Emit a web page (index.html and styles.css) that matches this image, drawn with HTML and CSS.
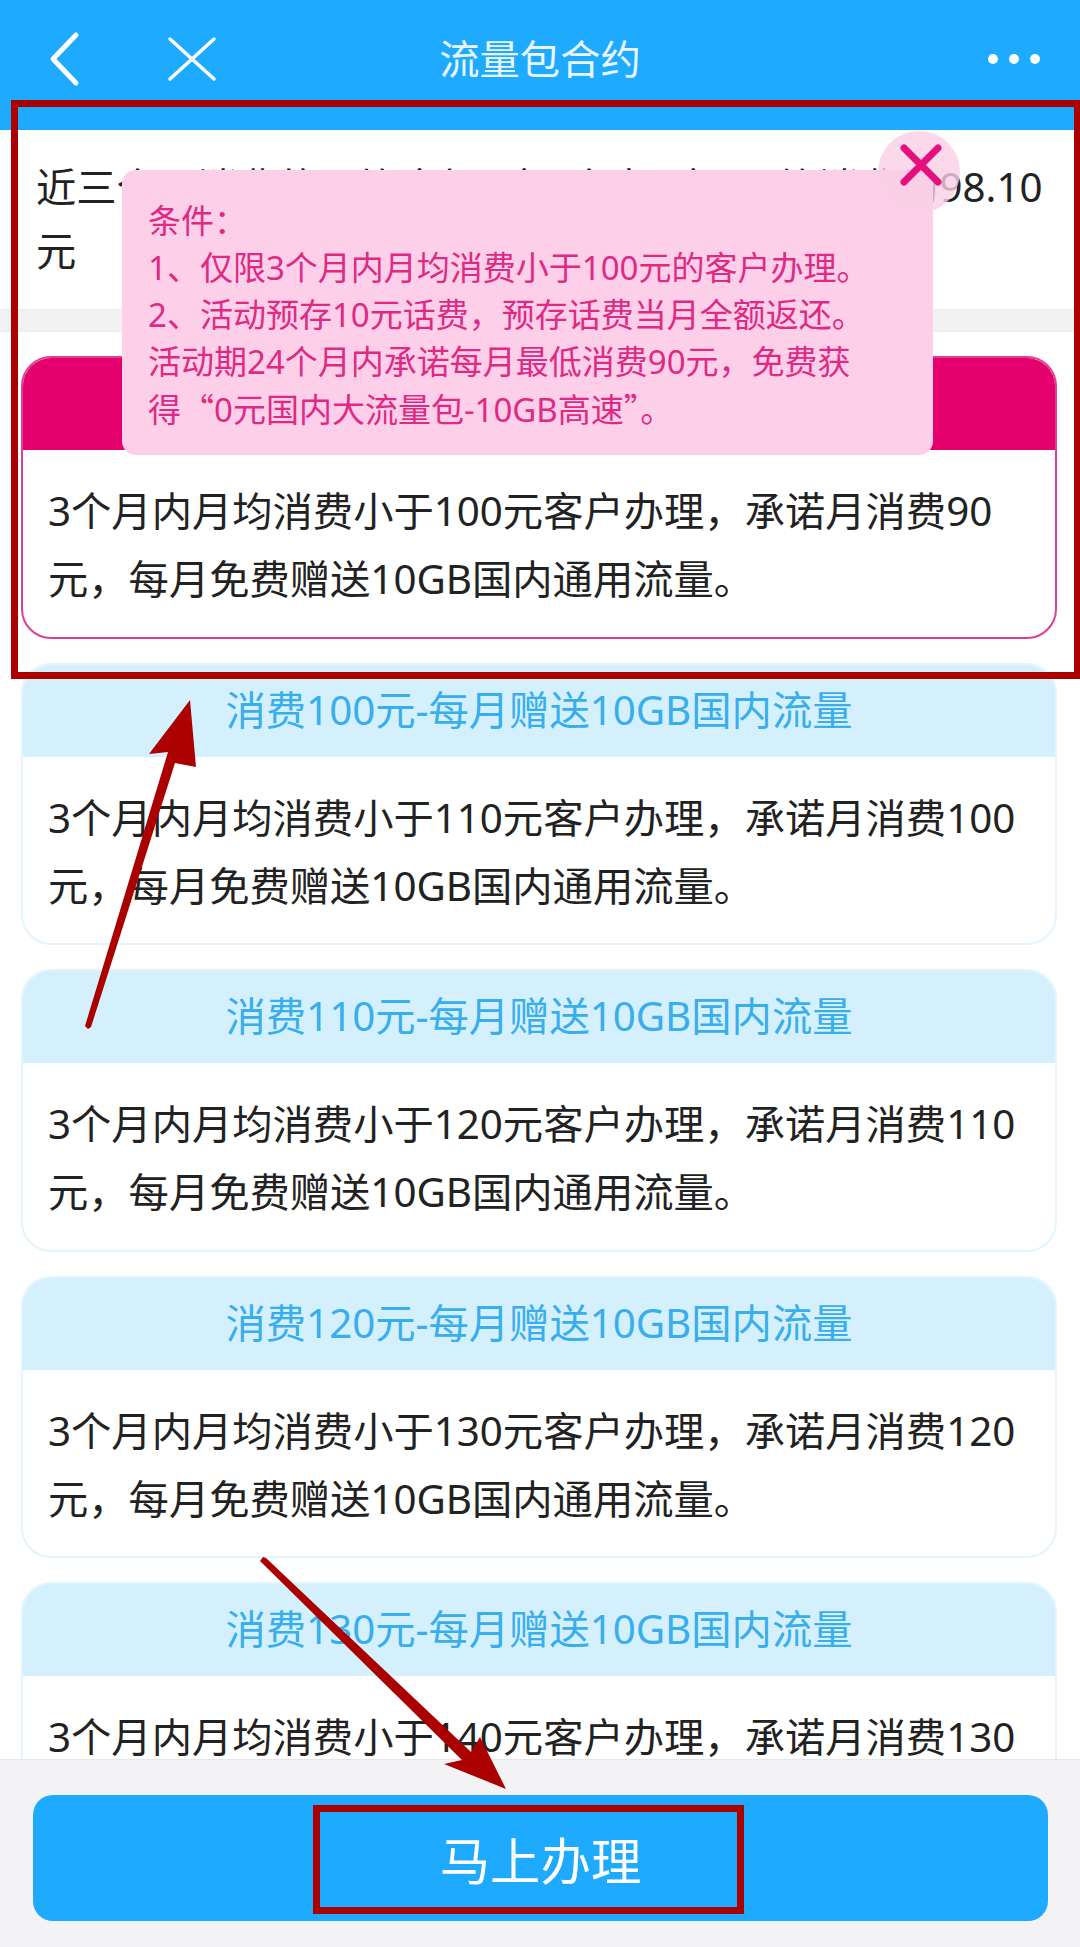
FILE: index.html
```html
<!DOCTYPE html>
<html>
<head>
    <meta charset="UTF-8">
    <title>流量包合约</title>
    <link rel="stylesheet" href="styles.css">
</head>
<body>
<div class="page">
    <header class="top-bar">
        <div class="top-left">
            <svg class="icon-back" width="40" height="60" viewBox="0 0 40 60"><path d="M28 6 L5 30 L28 54" fill="none" stroke="#fff" stroke-width="5" stroke-linecap="round" stroke-linejoin="round"/></svg>
            <svg class="icon-close" width="50" height="46" viewBox="0 0 50 46"><path d="M3 3 L47 43 M47 3 L3 43" fill="none" stroke="#fff" stroke-width="3.5" stroke-linecap="round"/></svg>
        </div>
        <div class="top-title">流量包合约</div>
        <div class="top-more"><i></i><i></i><i></i></div>
    </header>

    <section class="summary">近三个月消费的平均金额 （不含当月） 月均消费为98.10元</section>
    <div class="divider"></div>

    <div class="plans">
        <div class="plan active">
            <div class="plan-title">消费90元-每月赠送10GB国内流量</div>
            <div class="plan-desc">3个月内月均消费小于100元客户办理，承诺月消费90元，每月免费赠送10GB国内通用流量。</div>
        </div>
        <div class="plan">
            <div class="plan-title">消费100元-每月赠送10GB国内流量</div>
            <div class="plan-desc">3个月内月均消费小于110元客户办理，承诺月消费100元，每月免费赠送10GB国内通用流量。</div>
        </div>
        <div class="plan">
            <div class="plan-title">消费110元-每月赠送10GB国内流量</div>
            <div class="plan-desc">3个月内月均消费小于120元客户办理，承诺月消费110元，每月免费赠送10GB国内通用流量。</div>
        </div>
        <div class="plan">
            <div class="plan-title">消费120元-每月赠送10GB国内流量</div>
            <div class="plan-desc">3个月内月均消费小于130元客户办理，承诺月消费120元，每月免费赠送10GB国内通用流量。</div>
        </div>
        <div class="plan">
            <div class="plan-title">消费130元-每月赠送10GB国内流量</div>
            <div class="plan-desc">3个月内月均消费小于140元客户办理，承诺月消费130元，每月免费赠送10GB国内通用流量。</div>
        </div>
    </div>

    <!-- 条件弹层 -->
    <div class="tip">
        条件：<br>
        1、仅限3个月内月均消费小于100元的客户办理。<br>
        2、活动预存10元话费，预存话费当月全额返还。<br>
        活动期24个月内承诺每月最低消费90元，免费获得<span class="cjk">“</span>0元国内大流量包-10GB高速<span class="cjk">”</span>。
    </div>
    <div class="tip-close">
        <svg width="44" height="44" viewBox="0 0 44 44"><path d="M5 5 L39 39 M39 5 L5 39" fill="none" stroke="#e60f7e" stroke-width="7" stroke-linecap="round"/></svg>
    </div>

    <div class="bottom-bar">
        <div class="btn">马上办理</div>
    </div>

    <!-- 截图上的红色标注 -->
    <svg class="marks" width="1080" height="1947" viewBox="0 0 1080 1947">
        <rect x="14.5" y="103.5" width="1063" height="572" fill="none" stroke="#ab0000" stroke-width="7"/>
        <rect x="316.5" y="1808.5" width="424" height="102" fill="none" stroke="#ab0000" stroke-width="7"/>
        <polygon points="85,1026 88,1029 91,1027 175,763 196,767 190,700 149,754 168,752" fill="#ab0000"/>
        <polygon points="260,1561 263,1557 266,1558 471,1752 480,1737 506,1789 444,1764 462,1760" fill="#ab0000"/>
    </svg>
</div>
</body>
</html>
```

FILE: styles.css
```css
* {
    margin: 0;
    padding: 0;
    box-sizing: border-box;
}

body {
    font-family: "Noto Sans", "Noto Sans CJK SC", sans-serif;
    color: #222;
    background: #fff;
}

.page {
    position: relative;
    width: 1080px;
    height: 1947px;
    overflow: hidden;
}

.top-bar {
    display: grid;
    grid-template-columns: 1fr auto 1fr;
    align-items: center;
    height: 130px;
    padding: 0 40px 12px 40px;
    background: #1eaaff;
    color: #fff;
}

.top-left {
    display: flex;
    align-items: center;
    gap: 79px;
    padding-left: 8px;
}

.top-title {
    font-size: 40.3px;
    line-height: 60px;
    opacity: .9;
}

.top-more {
    display: flex;
    justify-content: flex-end;
    gap: 11px;
}

.top-more i {
    width: 10px;
    height: 10px;
    border-radius: 50%;
    background: #fff;
}

.summary {
    height: 179px;
    padding: 25px 30px 0 36px;
    font-size: 40.3px;
    line-height: 64px;
    word-spacing: -2px;
    color: #222;
}

.divider {
    height: 23px;
    background: #f2f2f2;
    border-top: 1px solid #ececec;
    border-bottom: 1px solid #ececec;
}

.plans {
    display: flex;
    flex-direction: column;
    gap: 24px;
    padding: 24px 23px 0 21px;
}

.plan {
    flex: none;
    height: 282.5px;
    border: 2px solid #e4f4fd;
    border-radius: 30px;
    overflow: hidden;
    background: #fff;
}

.plan-title {
    height: 93px;
    margin: -1px;
    font-size: 40.3px;
    line-height: 92px;
    text-align: center;
    color: #38aeec;
    background: #d4f0fd;
}

.plan-desc {
    padding: 28px 25px 0;
    font-size: 40.3px;
    line-height: 68px;
}

.plan.active {
    border-color: #df3f92;
}

.plan.active .plan-title {
    color: #fff;
    background: #e4006d;
}

.tip {
    position: absolute;
    top: 170px;
    left: 122px;
    width: 811px;
    height: 285px;
    padding: 27px 60px 0 26px;
    border-radius: 14px;
    background: #fdcfe9;
    color: #de2a84;
    font-size: 33px;
    line-height: 47px;
}

.cjk {
    font-family: "Noto Sans CJK SC", sans-serif;
}

.tip-close {
    position: absolute;
    top: 131px;
    left: 878px;
    display: flex;
    align-items: flex-start;
    justify-content: center;
    width: 82px;
    height: 82px;
    padding: 12px 0 0 3px;
    border-radius: 50%;
    background: rgba(250, 208, 230, .8);
}

.bottom-bar {
    position: absolute;
    left: 0;
    right: 0;
    bottom: 0;
    height: 188px;
    padding: 35px 32px 26px 33px;
    background: #f3f3f5;
    border-top: 1px solid #e6e6e8;
}

.btn {
    display: flex;
    align-items: center;
    justify-content: center;
    height: 100%;
    border-radius: 20px;
    background: #1eaaff;
    color: #fff;
    font-size: 50.4px;
}

.marks {
    position: absolute;
    top: 0;
    left: 0;
    pointer-events: none;
}
```
